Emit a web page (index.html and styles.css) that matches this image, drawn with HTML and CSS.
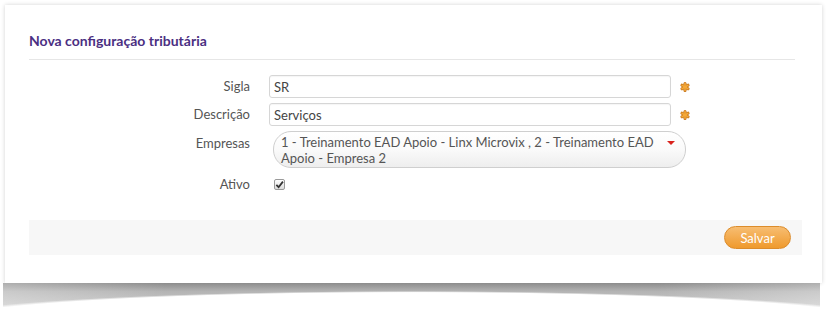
FILE: index.html
```html
<!DOCTYPE html>
<html lang="pt-BR">
	<head>
		<meta charset="utf-8">
		<title>Nova configuração tributária</title>
		<link rel="stylesheet" href="styles.css">
	</head>

	<body>
		<div class="panel">
			<h2 class="panel-title">Nova configuração tributária</h2>

			<form class="form">
				<label class="form-label" for="sigla">Sigla</label>
				<div class="form-field">
					<input class="text-input" id="sigla" type="text" value="SR">
					<svg class="required" viewBox="0 0 10 10" width="10" height="10">
						<g stroke="#c26f12" stroke-width="3" stroke-linecap="round">
							<line x1="5" y1="1.5" x2="5" y2="8.5"/>
							<line x1="2" y1="3.2" x2="8" y2="6.8"/>
							<line x1="2" y1="6.8" x2="8" y2="3.2"/>
						</g>
						<g stroke="#f4a93a" stroke-width="1.6" stroke-linecap="round">
							<line x1="5" y1="1.5" x2="5" y2="8.5"/>
							<line x1="2" y1="3.2" x2="8" y2="6.8"/>
							<line x1="2" y1="6.8" x2="8" y2="3.2"/>
						</g>
					</svg>
				</div>

				<label class="form-label" for="descricao">Descrição</label>
				<div class="form-field">
					<input class="text-input" id="descricao" type="text" value="Serviços">
					<svg class="required" viewBox="0 0 10 10" width="10" height="10">
						<g stroke="#c26f12" stroke-width="3" stroke-linecap="round">
							<line x1="5" y1="1.5" x2="5" y2="8.5"/>
							<line x1="2" y1="3.2" x2="8" y2="6.8"/>
							<line x1="2" y1="6.8" x2="8" y2="3.2"/>
						</g>
						<g stroke="#f4a93a" stroke-width="1.6" stroke-linecap="round">
							<line x1="5" y1="1.5" x2="5" y2="8.5"/>
							<line x1="2" y1="3.2" x2="8" y2="6.8"/>
							<line x1="2" y1="6.8" x2="8" y2="3.2"/>
						</g>
					</svg>
				</div>

				<span class="form-label form-label--top">Empresas</span>
				<div class="form-field">
					<div class="multi-select">
						<span class="multi-select-text">1 - Treinamento EAD Apoio - Linx Microvix , 2 - Treinamento EAD Apoio - Empresa 2</span>
						<span class="multi-select-arrow"></span>
					</div>
				</div>

				<span class="form-label">Ativo</span>
				<div class="form-field">
					<span class="checkbox">
						<svg viewBox="0 0 10 10" width="9" height="9">
							<path d="M1.5 5.5 L4 8 L8.8 1.8" fill="none" stroke="#333" stroke-width="2"/>
						</svg>
					</span>
				</div>
			</form>

			<div class="panel-footer">
				<button class="btn-save" type="button">Salvar</button>
			</div>
		</div>
		<div class="panel-shadow"></div>
	</body>
</html>
```

FILE: styles.css
```css
/* Base */
* {
	padding: 0;
	margin: 0;
	box-sizing: border-box;
}

body {
	font-family: Lato, 'Liberation Sans', Arial, sans-serif;
	font-size: 13px;
	color: #555;
	background: #fff;
	padding: 5px 14px 0 5px;
}

/* Panel */
.panel {
	height: 278px;
	padding: 26px 20px 0 24px;
	background: #fff;
	box-shadow: 0 0 4px rgba(0, 0, 0, 0.18);
}

/* Curled shadow under the panel */
.panel-shadow {
	height: 24px;
	margin: 0 2px 0 -2px;
	background:
		radial-gradient(ellipse 492px 31px at 50% 39px, #fff 95%, rgba(255, 255, 255, 0) 100%),
		linear-gradient(to right, rgba(255, 255, 255, 0.3), rgba(255, 255, 255, 0) 20%, rgba(255, 255, 255, 0) 80%, rgba(255, 255, 255, 0.3)),
		linear-gradient(to bottom, #8c8c8c, #b4b4b4 35%, #cacaca);
}

.panel-title {
	font-size: 14px;
	font-weight: bold;
	color: #4b2f82;
	line-height: 20px;
	padding-bottom: 8px;
	margin-right: 7px;
	border-bottom: 1px solid #e6e6e6;
}

/* Form grid */
.form {
	display: grid;
	grid-template-columns: 221px 1fr;
	column-gap: 19px;
	row-gap: 5px;
	padding-top: 15px;
}

.form-label {
	text-align: right;
	line-height: 23px;
	color: #555;
}

.form-label--top {
	line-height: 24px;
}

.form-field {
	display: flex;
	align-items: center;
	gap: 9px;
}

.text-input {
	width: 402px;
	height: 23px;
	border: 1px solid #d6d6d6;
	border-radius: 3px;
	padding: 0 4px;
	font-family: inherit;
	font-size: 13px;
	color: #444;
	outline: none;
	box-shadow: inset 0 1px 1px rgba(0, 0, 0, 0.04);
}

.required {
	flex: none;
}

/* Multiple select (chosen like) */
.multi-select {
	position: relative;
	width: 413px;
	height: 37px;
	margin-left: 4px;
	padding: 2px 24px 0 7px;
	border: 1px solid #cfcfcf;
	border-radius: 18px;
	background: linear-gradient(to bottom, #fff 0, #fafafa 50%, #eee 100%);
	line-height: 16px;
	color: #555;
}

.multi-select-arrow {
	position: absolute;
	right: 10px;
	top: 9px;
	border-left: 4px solid transparent;
	border-right: 4px solid transparent;
	border-top: 4px solid #d9231d;
}

.checkbox {
	display: flex;
	align-items: center;
	justify-content: center;
	width: 11px;
	height: 11px;
	margin-left: 5px;
	border: 1px solid #9a9a9a;
	border-radius: 2px;
	background: linear-gradient(to bottom, #fff, #dcdcdc);
}

/* Footer with the save button */
.panel-footer {
	display: flex;
	justify-content: flex-end;
	align-items: center;
	height: 35px;
	margin-top: 24px;
	padding-right: 11px;
	background: #f7f7f7;
}

.btn-save {
	width: 67px;
	height: 23px;
	border: 1px solid #dc8c2b;
	border-radius: 12px;
	background: linear-gradient(to bottom, #f7bd72, #ef9a2d);
	color: #fff;
	font-family: inherit;
	font-size: 13px;
	cursor: pointer;
}
```
